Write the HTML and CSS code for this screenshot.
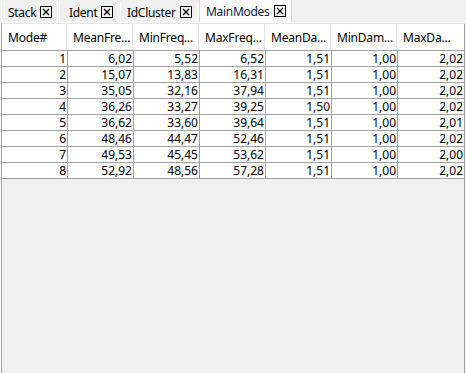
FILE: index.html
```html
<!DOCTYPE html>
<html lang="en">
<head>
    <meta charset="UTF-8">
    <title>MainModes</title>
    <link rel="stylesheet" href="styles.css">
</head>
<body>
<div class="tabs">
    <div class="tab tab-stack">Stack <span class="close"><svg width="12" height="12" viewBox="0 0 12 12"><rect x="0.5" y="0.5" width="11" height="11" fill="none" stroke="#000"/><path d="M3 3 L9 9 M9 3 L3 9" stroke="#000" stroke-width="1.4"/></svg></span></div>
    <div class="tab tab-ident">Ident <span class="close"><svg width="12" height="12" viewBox="0 0 12 12"><rect x="0.5" y="0.5" width="11" height="11" fill="none" stroke="#000"/><path d="M3 3 L9 9 M9 3 L3 9" stroke="#000" stroke-width="1.4"/></svg></span></div>
    <div class="tab tab-cluster">IdCluster <span class="close"><svg width="12" height="12" viewBox="0 0 12 12"><rect x="0.5" y="0.5" width="11" height="11" fill="none" stroke="#000"/><path d="M3 3 L9 9 M9 3 L3 9" stroke="#000" stroke-width="1.4"/></svg></span></div>
    <div class="tab tab-modes active">MainModes <span class="close"><svg width="12" height="12" viewBox="0 0 12 12"><rect x="0.5" y="0.5" width="11" height="11" fill="none" stroke="#000"/><path d="M3 3 L9 9 M9 3 L3 9" stroke="#000" stroke-width="1.4"/></svg></span></div>
</div>

<div class="panel">
    <div class="grid-head">
        <div class="hcell">Mode#</div>
        <div class="hcell">MeanFre...</div>
        <div class="hcell">MinFreq...</div>
        <div class="hcell">MaxFreq...</div>
        <div class="hcell">MeanDa...</div>
        <div class="hcell">MinDam...</div>
        <div class="hcell">MaxDa...</div>
    </div>
    <div class="grid-body">
        <div class="row"><div>1</div><div>6,02</div><div>5,52</div><div>6,52</div><div>1,51</div><div>1,00</div><div>2,02</div></div>
        <div class="row"><div>2</div><div>15,07</div><div>13,83</div><div>16,31</div><div>1,51</div><div>1,00</div><div>2,02</div></div>
        <div class="row"><div>3</div><div>35,05</div><div>32,16</div><div>37,94</div><div>1,51</div><div>1,00</div><div>2,02</div></div>
        <div class="row"><div>4</div><div>36,26</div><div>33,27</div><div>39,25</div><div>1,50</div><div>1,00</div><div>2,02</div></div>
        <div class="row"><div>5</div><div>36,62</div><div>33,60</div><div>39,64</div><div>1,51</div><div>1,00</div><div>2,01</div></div>
        <div class="row"><div>6</div><div>48,46</div><div>44,47</div><div>52,46</div><div>1,51</div><div>1,00</div><div>2,02</div></div>
        <div class="row"><div>7</div><div>49,53</div><div>45,45</div><div>53,62</div><div>1,51</div><div>1,00</div><div>2,00</div></div>
        <div class="row"><div>8</div><div>52,92</div><div>48,56</div><div>57,28</div><div>1,51</div><div>1,00</div><div>2,02</div></div>
    </div>
</div>
</body>
</html>
```

FILE: styles.css
```css
html, body {
    margin: 0;
    height: 100%;
    overflow: hidden;
}

body {
    font-family: 'Noto Sans', 'Open Sans', sans-serif;
    font-size: 12px;
    color: #000;
    background: #fbfbfb;
    display: flex;
    flex-direction: column;
}

/* tab strip */
.tabs {
    display: flex;
    align-items: flex-end;
    height: 22px;
    padding-left: 1px;
    background: #f0f0f0;
    border-bottom: 1px solid #fbfbfb;
}

.tab {
    box-sizing: border-box;
    display: flex;
    align-items: center;
    justify-content: space-between;
    height: 20px;
    padding: 0 5px 0 6px;
    margin-right: 1px;
    background: #f0f0f0;
    border-left: 1px solid #fff;
    border-right: 1px solid #fff;
    letter-spacing: -0.3px;
    white-space: nowrap;
}

.tab-stack { width: 57px; }
.tab-ident { width: 60px; padding-left: 9px; }
.tab-cluster { width: 78px; }
.tab-modes { width: 93px; }

.tab.active {
    height: 22px;
    background: #fbfbfb;
    border-left: 1px solid #dadada;
    border-right: 1px solid #dadada;
    color: #102040;
}

.close {
    display: flex;
}

/* data grid */
.panel {
    flex: 1;
    margin-left: 1px;
    width: 462px;
    background: #f0f0f0;
    border-left: 1px solid #a0a0a0;
    border-right: 1px solid #a0a0a0;
    border-top: 1px solid #e3e3e3;
}

.grid-head {
    display: grid;
    grid-template-columns: 65px repeat(6, 66px);
    height: 26px;
    background: #fff;
    border-bottom: 1px solid #a0a0a0;
}

.hcell {
    display: flex;
    align-items: center;
    padding-left: 6px;
    border-right: 1px solid #e5e5e5;
    white-space: nowrap;
    letter-spacing: -0.2px;
}

.hcell:last-child {
    border-right: none;
}

.row {
    display: grid;
    grid-template-columns: repeat(7, 66px);
    background: #fff;
    border-bottom: 1px solid #a0a0a0;
}

.row div {
    height: 15px;
    line-height: 15px;
    text-align: right;
    padding-right: 1px;
    border-right: 1px solid #a0a0a0;
}

.row div:last-child {
    border-right: none;
}
```
